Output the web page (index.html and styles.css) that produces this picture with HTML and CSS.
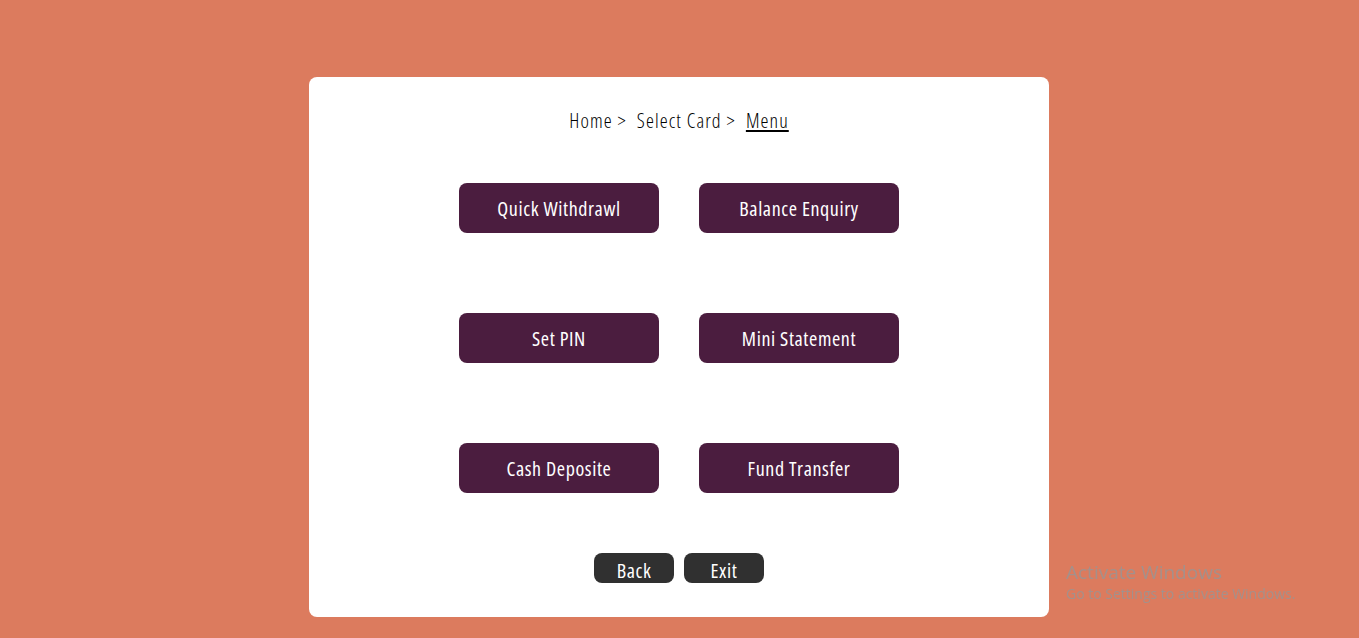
FILE: index.html
```html
<!DOCTYPE html>
<html lang="en">
<head>
<meta charset="utf-8">
<title>ATM Menu</title>
<link rel="stylesheet" href="styles.css">
</head>
<body>
<main class="card">
  <nav class="crumbs">
    <span class="crumb">Home &gt;</span>
    <span class="crumb">Select Card &gt;</span>
    <a class="crumb current" href="#">Menu</a>
  </nav>
  <div class="menu">
    <button class="opt">Quick Withdrawl</button>
    <button class="opt">Balance Enquiry</button>
    <button class="opt">Set PIN</button>
    <button class="opt">Mini Statement</button>
    <button class="opt">Cash Deposite</button>
    <button class="opt">Fund Transfer</button>
  </div>
  <div class="actions">
    <button class="act">Back</button>
    <button class="act">Exit</button>
  </div>
</main>
<div class="watermark">
  <div class="wm-title">Activate Windows</div>
  <div class="wm-sub">Go to Settings to activate Windows.</div>
</div>
</body>
</html>
```
FILE: styles.css
```css
html, body {
  margin: 0;
  padding: 0;
}
body {
  background: #dc7b5e;
  font-family: "Open Sans", "DejaVu Sans Condensed", sans-serif;
  font-stretch: 75%;
  min-height: 638px;
}
.card {
  box-sizing: border-box;
  width: 740px;
  height: 540px;
  margin: 77px 0 0 calc(50% - 370.5px);
  background: #ffffff;
  border-radius: 8px;
  display: flex;
  flex-direction: column;
  align-items: center;
  padding-top: 32px;
}
.crumbs {
  display: flex;
  gap: 10px;
  font-size: 20px;
  font-weight: 300;
  letter-spacing: 1.1px;
  line-height: 24px;
  color: #000;
}
.crumb {
  color: #000;
}
.crumb.current {
  color: #000;
  text-decoration: underline;
  text-decoration-thickness: 2px;
  text-underline-offset: 2px;
}
.menu {
  margin-top: 50px;
  display: grid;
  grid-template-columns: 200px 200px;
  grid-auto-rows: 50px;
  column-gap: 40px;
  row-gap: 80px;
}
.opt {
  border: none;
  border-radius: 8px;
  background: #4b1d3f;
  color: #ffffff;
  font-family: inherit;
  font-stretch: inherit;
  font-weight: 400;
  font-size: 20px;
  letter-spacing: 0.6px;
  padding: 0;
}
.actions {
  margin-top: 60px;
  display: flex;
  gap: 10px;
}
.act {
  width: 80px;
  height: 30px;
  border: none;
  border-radius: 8px;
  background: #303030;
  color: #ffffff;
  font-family: inherit;
  font-stretch: inherit;
  font-weight: 400;
  font-size: 20px;
  letter-spacing: 0.6px;
  padding: 6px 0 0;
  line-height: 24px;
}
.watermark {
  position: fixed;
  left: 1066px;
  top: 560px;
  color: rgba(150, 150, 150, 0.8);
  font-family: "Open Sans", "Noto Sans", sans-serif;
  font-stretch: 100%;
}
.wm-title {
  font-size: 19px;
  line-height: 24px;
}
.wm-sub {
  font-size: 14px;
  line-height: 20px;
}
```
